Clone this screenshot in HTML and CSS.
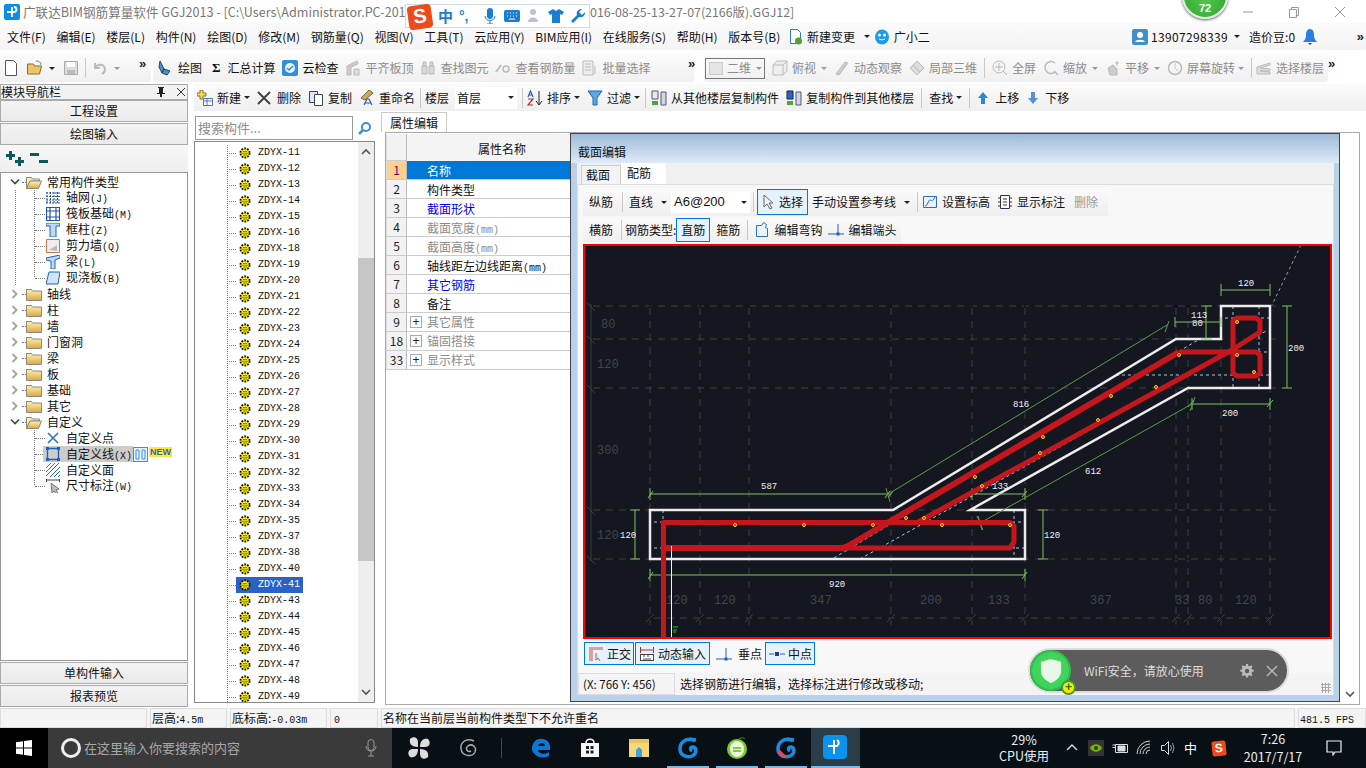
FILE: index.html
```html
<!DOCTYPE html>
<html lang="zh-CN">
<head>
<meta charset="utf-8">
<title>广联达BIM钢筋算量软件 GGJ2013</title>
<link rel="stylesheet" href="styles.css">
</head>
<body>
<svg class="defs" aria-hidden="true">
  <defs>
    <linearGradient id="fold" x1="0" y1="0" x2="0" y2="1"><stop offset="0" stop-color="#fdf2c0"/><stop offset="1" stop-color="#e0a73c"/></linearGradient>
    <symbol id="gear" viewBox="0 0 12 12"><circle cx="6" cy="6" r="4.600" fill="#ffec00" stroke="#111" stroke-width="1.800" stroke-dasharray="1.800 1.100"/><path d="M4.500 4h1v1h-1zM6.500 4h1v1h-1zM3.500 5.800h1v1h-1zM5.500 5.800h1v1h-1zM7.500 5.800h1v1h-1zM4.500 7.500h1v1h-1zM6.500 7.500h1v1h-1z" fill="#111"/></symbol>
    <symbol id="fc" viewBox="0 0 16 14"><path d="M.5 2.500h5l1 1.500h9v9.500H.5z" fill="url(#fold)" stroke="#8a8a7a"/></symbol>
    <symbol id="fo" viewBox="0 0 16 14"><path d="M.5 2.500h5l1 1.500h7v2H4L.5 13.500z" fill="#fbeeb8" stroke="#8a8a7a"/><path d="M4 6h11.500l-3 7.500H.5z" fill="url(#fold)" stroke="#8a8a7a"/></symbol>
    <symbol id="cr" viewBox="0 0 8 10"><path d="M1.500 1l4 4-4 4" fill="none" stroke="#a6a6a6" stroke-width="2"/></symbol>
    <symbol id="cd" viewBox="0 0 10 8"><path d="M1 1.500l4 4 4-4" fill="none" stroke="#444" stroke-width="1.600"/></symbol>
    <path id="gridlines" d="M587 306H1276M587 339H1276M587 388H1276M587 510H1276M587 559H1276M650 302V625M700 302V625M749 302V625M891 302V625M972 302V625M1025 302V625M1176 302V625M1188 302V625M1221 302V625M1270 302V625M648 618H1272"/>
  </defs>
</svg>

<div class="app">
  <header class="title">
    <svg class="logo" viewBox="0 0 16 16"><rect width="16" height="16" rx="2" fill="#0b8fe6"/><path d="M8 3v10M3 8h7a2.500 2.500 0 0 0 0-5" fill="none" stroke="#fff" stroke-width="1.800"/></svg>
    <span class="t1">广联达BIM钢筋算量软件 GGJ2013 - [C:\Users\Administrator.PC-201</span>
    <span class="t2">016-08-25-13-27-07(2166版).GGJ12]</span>
    <div class="winctl">
      <svg viewBox="0 0 12 12"><path d="M1 6h10" stroke="#999"/></svg>
      <svg viewBox="0 0 12 12"><path d="M1.500 3.500h7v8h-7zM3.500 3V1.500h7v8H9" fill="none" stroke="#999"/></svg>
      <svg viewBox="0 0 12 12"><path d="M1 1l10 10M11 1L1 11" stroke="#999"/></svg>
    </div>
  </header>

  <nav class="menu">
    <span class="mi">文件(F)</span><span class="mi">编辑(E)</span><span class="mi">楼层(L)</span><span class="mi">构件(N)</span><span class="mi">绘图(D)</span><span class="mi">修改(M)</span><span class="mi">钢筋量(Q)</span><span class="mi">视图(V)</span><span class="mi">工具(T)</span><span class="mi">云应用(Y)</span><span class="mi">BIM应用(I)</span><span class="mi">在线服务(S)</span><span class="mi">帮助(H)</span><span class="mi">版本号(B)</span>
    <span class="mi ic5"><svg class="i16" viewBox="0 0 16 16"><path d="M2.500.5h7l3 3v11h-10z" fill="#fff" stroke="#2b7cc9"/><circle cx="10.500" cy="12" r="3.500" fill="#53a32a"/></svg>新建变更<i class="car"></i></span>
    <span class="mi ic5 gx"><svg class="i16" viewBox="0 0 16 16"><ellipse cx="8" cy="8" rx="7" ry="7.500" fill="#1d9be8"/><circle cx="5.500" cy="6" r="1.500" fill="#fff"/><circle cx="10.500" cy="6" r="1.500" fill="#fff"/><path d="M5 10q3 2 6 0" stroke="#fff" fill="none"/></svg>广小二</span>
    <span class="grow"></span>
    <div class="userbox">
      <svg class="i16" viewBox="0 0 16 16"><rect width="16" height="16" rx="2" fill="#3d8fce"/><circle cx="8" cy="6" r="3" fill="#fff"/><path d="M3 13c1-3 9-3 10 0z" fill="#fff"/></svg>
      <span class="phone">13907298339</span><i class="car uc"></i><span class="coin">造价豆:0</span>
      <svg class="i16 bell" viewBox="0 0 16 16"><path d="M8 0c3 0 4 3 4 6s1 5 3 7H1c2-2 3-4 3-7s1-6 4-6z" fill="#2a7de1"/><path d="M6 14h4l-2 2z" fill="#124b90"/></svg>
    </div>
    <span class="more">»</span>
  </nav>

  <div class="bar1">
    <div class="group g1">
      <svg class="i16" viewBox="0 0 16 16"><path d="M2.500.5h8l3 3v12h-11z" fill="#fff" stroke="#555"/></svg>
      <span class="ti tight"><svg class="i16" viewBox="0 0 16 16"><path d="M.5 4h6l1 2h7l-2 8H.5z" fill="#f0c56a" stroke="#8a6a2a"/><path d="M9 1c3 0 5 1 5 4" fill="none" stroke="#3a7"/></svg><i class="car"></i></span>
      <svg class="i16" viewBox="0 0 16 16"><path d="M1.500 1.500h13v13h-13z" fill="#ddd" stroke="#aaa"/><rect x="4" y="2" width="8" height="5" fill="#fff"/><rect x="4" y="10" width="8" height="4" fill="#bbb"/></svg>
      <i class="sep sg1"></i>
      <span class="ti tight ug"><svg class="i16" viewBox="0 0 16 16"><path d="M3 3v5h5M3 8c2-4 9-5 10 1 0 2-1 4-3 5" fill="none" stroke="#bbb" stroke-width="2"/></svg><i class="car off"></i></span>
    </div>
    <span class="more m1">»</span>
    <div class="group g2">
      <span class="ti"><svg class="i16" viewBox="0 0 16 16"><path d="M3 1l4 8-2 4-3-6zM7 9l6 2-3 4-5-2z" fill="#4f8fd0" stroke="#245"/></svg>绘图</span>
      <span class="ti sig"><b class="sigma">Σ</b>汇总计算</span>
      <span class="ti"><svg class="i16" viewBox="0 0 16 16"><rect width="16" height="16" rx="2" fill="#2f8fdc"/><circle cx="8" cy="8" r="5" fill="#e9f4fc"/><path d="M5 8l2 2 4-4" fill="none" stroke="#2f8fdc" stroke-width="1.500"/></svg>云检查</span>
      <span class="ti off"><svg class="i16" viewBox="0 0 16 16"><path d="M2 6l10-5 1 3-7 3v8H2z" fill="#ccc" stroke="#bbb"/><path d="M9 9h5v6H9z" fill="#ddd" stroke="#bbb"/></svg>平齐板顶</span>
      <span class="ti off"><svg class="i16" viewBox="0 0 16 16"><path d="M2 6h5v8H2zM9 6h5v8H9zM3 2h3v4H3zM10 2h3v4h-3z" fill="#d8d8d8" stroke="#bbb"/></svg>查找图元</span>
      <span class="ti off"><svg class="i16" viewBox="0 0 16 16"><circle cx="11" cy="9" r="3" fill="none" stroke="#bbb" stroke-width="1.500"/><path d="M1 12l5-7" stroke="#bbb" stroke-width="2"/></svg>查看钢筋量</span>
      <span class="ti off"><svg class="i16" viewBox="0 0 16 16"><path d="M1 1h10v14H1z" fill="#eee" stroke="#bbb"/><path d="M3 4h6M3 7h6M3 10h6M13 6v8" stroke="#bbb"/></svg>批量选择</span>
    </div>
    <span class="more m2">»</span>
    <div class="group g3">
      <span class="combo2d"><i class="sq"></i>二维<i class="car off"></i></span>
      <span class="ti off"><svg class="i16" viewBox="0 0 16 16"><path d="M1 5l4-4h10v10l-4 4H1zM1 5h10v10M11 5l4-4" fill="#eee" stroke="#bbb"/></svg>俯视<i class="car off c9"></i></span>
      <span class="ti off"><svg class="i16" viewBox="0 0 16 16"><path d="M2 14l9-12 3 1-9 12z" fill="#ccc" stroke="#bbb"/></svg>动态观察</span>
      <span class="ti off"><svg class="i16" viewBox="0 0 16 16"><path d="M8 1l7 7-7 7-7-7z" fill="#ddd" stroke="#bbb"/><path d="M4 5l7 7" stroke="#bbb"/></svg>局部三维</span>
      <i class="sep"></i>
      <span class="ti off"><svg class="i16" viewBox="0 0 16 16"><circle cx="7" cy="7" r="6" fill="#f4f4f4" stroke="#bbb"/><path d="M7 3v8M3 7h8M11 11l4 4" stroke="#bbb"/></svg>全屏</span>
      <span class="ti off"><svg class="i16" viewBox="0 0 16 16"><path d="M12 3a6 6 0 1 0 0 9M11 11l4 4" fill="none" stroke="#bbb" stroke-width="1.500"/></svg>缩放<i class="car off c9"></i></span>
      <span class="ti off"><svg class="i16" viewBox="0 0 16 16"><path d="M3 8l5-3 4 4v6H5zM12 1v5M10 3h4" fill="#ccc" stroke="#bbb"/></svg>平移<i class="car off c9"></i></span>
      <span class="ti off"><svg class="i16" viewBox="0 0 16 16"><circle cx="8" cy="8" r="6.500" fill="none" stroke="#bbb" stroke-width="1.500"/><path d="M8 3v5l3 3" stroke="#ccc" fill="none"/></svg>屏幕旋转<i class="car off"></i></span>
      <i class="sep"></i>
      <span class="ti off lastt"><svg class="i16" viewBox="0 0 16 16"><path d="M1 7l13-4v2L4 8l10 1v2H4l10 1v2H1z" fill="#ddd" stroke="#bbb"/></svg>选择楼层</span>
    </div>
    <span class="more m3">»</span>
  </div>

  <div class="work">
    <aside class="nav">
      <div class="navhead"><span>模块导航栏</span><svg class="navi" viewBox="0 0 12 12"><path d="M3 1h6v1H8v5h2v1H7v3H5V8H2V7h2V2H3z" fill="#222"/></svg><svg class="navi" viewBox="0 0 12 12"><path d="M2 2l8 8M10 2l-8 8" stroke="#333"/></svg></div>
      <div class="navbtnrow">工程设置</div>
      <div class="navbtnrow">绘图输入</div>
      <div class="treebar">
        <svg viewBox="0 0 18 15" class="tb-i"><path d="M3 0h3v3h3v3H6v3H3V6H0V3h3zM12 6h3v3h3v3h-3v3h-3v-3H9V9h3z" fill="#0a5a5a"/></svg>
        <svg viewBox="0 0 18 15" class="tb-i"><path d="M0 2h9v3H0zM9 9h9v3H9z" fill="#0a5a5a"/></svg>
      </div>
      <div class="tree">
        <div class="tr"><svg class="chev d"><use href="#cd"/></svg><i class="dots"></i><svg class="fi"><use href="#fo"/></svg><span>常用构件类型</span></div>
        <div class="tc first">
          <div class="tr2"><i class="dots l"></i><svg class="i14" viewBox="0 0 14 14"><path d="M1 1v12M4.500 1v12M8 1v12M11.500 1v12M0 2h14M0 5.500h14M0 9h14M0 12h14" stroke="#2453b0" stroke-dasharray="2 1"/></svg><span>轴网<span class="m">(J)</span></span></div>
          <div class="tr2"><i class="dots l"></i><svg class="i14" viewBox="0 0 14 14"><path d="M.5.500h13v13H.5zM.5 4h13M.5 10h13M4 .500v13M10 .500v13" fill="#fff" stroke="#2453b0" stroke-width="1.200"/></svg><span>筏板基础<span class="m">(M)</span></span></div>
          <div class="tr2"><i class="dots l"></i><svg class="i14" viewBox="0 0 14 14"><path d="M0 0h14v3H10v11H4V3H0z" fill="#bcdaf5" stroke="#1e62b8"/></svg><span>框柱<span class="m">(Z)</span></span></div>
          <div class="tr2"><i class="dots l"></i><svg class="i14" viewBox="0 0 14 14"><path d="M.5.500h13v13H.5z" fill="#eee" stroke="#c9784a"/><path d="M3 11l8-5v6z" fill="#bbb"/></svg><span>剪力墙<span class="m">(Q)</span></span></div>
          <div class="tr2"><i class="dots l"></i><svg class="i14" viewBox="0 0 14 14"><path d="M0 3l14-3v3L9 5v9H5V6L0 5z" fill="#bcdaf5" stroke="#1e62b8"/></svg><span>梁<span class="m">(L)</span></span></div>
          <div class="tr2"><i class="dots l"></i><svg class="i14" viewBox="0 0 14 14"><path d="M3 1h11l-2 12H0z" fill="#cfe4f8" stroke="#1e62b8"/></svg><span>现浇板<span class="m">(B)</span></span></div>
        </div>
        <div class="tr"><svg class="chev"><use href="#cr"/></svg><i class="dots"></i><svg class="fi"><use href="#fc"/></svg><span>轴线</span></div>
        <div class="tr"><svg class="chev"><use href="#cr"/></svg><i class="dots"></i><svg class="fi"><use href="#fc"/></svg><span>柱</span></div>
        <div class="tr"><svg class="chev"><use href="#cr"/></svg><i class="dots"></i><svg class="fi"><use href="#fc"/></svg><span>墙</span></div>
        <div class="tr"><svg class="chev"><use href="#cr"/></svg><i class="dots"></i><svg class="fi"><use href="#fc"/></svg><span>门窗洞</span></div>
        <div class="tr"><svg class="chev"><use href="#cr"/></svg><i class="dots"></i><svg class="fi"><use href="#fc"/></svg><span>梁</span></div>
        <div class="tr"><svg class="chev"><use href="#cr"/></svg><i class="dots"></i><svg class="fi"><use href="#fc"/></svg><span>板</span></div>
        <div class="tr"><svg class="chev"><use href="#cr"/></svg><i class="dots"></i><svg class="fi"><use href="#fc"/></svg><span>基础</span></div>
        <div class="tr"><svg class="chev"><use href="#cr"/></svg><i class="dots"></i><svg class="fi"><use href="#fc"/></svg><span>其它</span></div>
        <div class="tr"><svg class="chev d"><use href="#cd"/></svg><i class="dots"></i><svg class="fi"><use href="#fo"/></svg><span>自定义</span></div>
        <div class="tc">
          <div class="tr2"><i class="dots l"></i><svg class="i14" viewBox="0 0 14 14"><path d="M2 2l10 10M12 2L2 12" stroke="#2a6fc4" stroke-width="1.500"/></svg><span>自定义点</span></div>
          <div class="tr2 sel"><i class="dots l"></i><svg class="i14" viewBox="0 0 14 14"><path d="M1.500 1.500h11v11h-11z" fill="none" stroke="#1e62b8" stroke-width="1.300"/><path d="M0 0h3v3H0zM11 0h3v3h-3zM0 11h3v3H0zM11 11h3v3h-3z" fill="#1e62b8"/></svg><span class="seltext">自定义线<span class="m">(X)</span></span><svg class="i15" viewBox="0 0 15 15"><rect x=".5" y=".500" width="14" height="14" fill="#e6f2fd" stroke="#3a8fe0"/><path d="M3 3h3v9H3zM9 3h3v9H9z" fill="none" stroke="#3a8fe0"/></svg><span class="new">NEW</span></div>
          <div class="tr2"><i class="dots l"></i><svg class="i14" viewBox="0 0 14 14"><path d="M0 5l5-5M0 9l9-9M0 13l13-13M4 14l10-10M8 14l6-6M12 14l2-2" stroke="#2a6fc4"/></svg><span>自定义面</span></div>
          <div class="tr2"><i class="dots l"></i><svg class="i14" viewBox="0 0 14 14"><path d="M0 1h14M.5 0v3M13.500 0v3" stroke="#444"/><path d="M5 4l8 6-3 1 2 3-2 1-2-3-2 2z" fill="#bbb" stroke="#777"/></svg><span>尺寸标注<span class="m">(W)</span></span></div>
        </div>
      </div>
      <div class="navbtnrow">单构件输入</div>
      <div class="navbtnrow">报表预览</div>
    </aside>

    <div class="rightcol">
      <div class="bar2">
        <span class="ti"><svg class="i16" viewBox="0 0 16 16"><path d="M3 0h3v3h3v3H6v3H3V6H0V3h3z" fill="#f2dc5a" stroke="#8a7a20"/><path d="M6.500 8.500h9v7h-9zM6.500 11h9M10 8.500v7" fill="#fff" stroke="#5577aa"/></svg>新建<i class="car"></i></span>
        <span class="ti delx"><svg class="i14" viewBox="0 0 14 14"><path d="M1 1l12 12M13 1L1 13" stroke="#444" stroke-width="2"/></svg>删除</span>
        <span class="ti"><svg class="i16" viewBox="0 0 16 16"><path d="M1.500 1.500h8v11h-8z" fill="#dde8f6" stroke="#345"/><path d="M6.500 4.500h8v11h-8z" fill="#fff" stroke="#345"/></svg>复制</span>
        <span class="ti"><svg class="i16" viewBox="0 0 16 16"><path d="M2 8l8-8 4 3-8 7z" fill="#cfaa45" stroke="#765"/><path d="M5 15l3-6h2l3 6M6.500 13h5" fill="none" stroke="#2a5bb0" stroke-width="1.200"/></svg>重命名</span>
        <i class="sep back2"></i>
        <span class="lbl">楼层</span>
        <span class="floor"><span>首层</span><i class="car"></i></span>
        <i class="sep back2"></i>
        <span class="ti back3"><svg class="i16" viewBox="0 0 16 16"><path d="M1 7l2.500-6L6 7M2 5h3" fill="none" stroke="#2a5bb0" stroke-width="1.200"/><path d="M1 9h5L1 15h5" fill="none" stroke="#a33" stroke-width="1.200"/><path d="M12 1v13M9 11l3 4 3-4" fill="none" stroke="#222"/></svg>排序<i class="car"></i></span>
        <span class="ti"><svg class="i16" viewBox="0 0 16 16"><path d="M1 1h14L10 8v7H6V8z" fill="#5aa5e8" stroke="#2068b0"/></svg>过滤<i class="car"></i></span>
        <i class="sep back2"></i>
        <span class="ti back2"><svg class="i16" viewBox="0 0 16 16"><path d="M1 1h6v8H1z" fill="#e8e8ee" stroke="#557"/><path d="M10 2h5v13h-5z" fill="#cdd9e8" stroke="#557"/><path d="M1 11h6v4H1z" fill="#4aa83a"/></svg>从其他楼层复制构件</span>
        <span class="ti"><svg class="i16" viewBox="0 0 16 16"><path d="M1 1h6v8H1z" fill="#2c66c4" stroke="#124"/><path d="M10 2h5v13h-5z" fill="#cdd9e8" stroke="#557"/><path d="M1 11h6v4H1z" fill="#4aa83a"/></svg>复制构件到其他楼层</span>
        <i class="sep"></i>
        <span class="ti"><span>查找</span><i class="car"></i></span>
        <i class="sep"></i>
        <span class="ti updn"><svg class="i12" viewBox="0 0 12 12"><path d="M6 0l5 6H8v6H4V6H1z" fill="#2a86d8"/></svg>上移</span>
        <span class="ti updn"><svg class="i12" viewBox="0 0 12 12"><path d="M6 12l5-6H8V0H4v6H1z" fill="#5a8fd8"/></svg>下移</span>
      </div>

      <div class="content">
        <div class="listcol">
          <div class="searchrow">
            <div class="search">搜索构件...</div>
            <svg class="srch" viewBox="0 0 14 14"><circle cx="8" cy="6" r="4" fill="none" stroke="#3a8fd8" stroke-width="2"/><path d="M5 9l-4 4" stroke="#3a8fd8" stroke-width="2.500"/></svg>
          </div>
          <div class="list">
            <div class="rows">
              <div class="zr"><i class="dots z"></i><svg class="g"><use href="#gear"/></svg>ZDYX-11</div>
              <div class="zr"><i class="dots z"></i><svg class="g"><use href="#gear"/></svg>ZDYX-12</div>
              <div class="zr"><i class="dots z"></i><svg class="g"><use href="#gear"/></svg>ZDYX-13</div>
              <div class="zr"><i class="dots z"></i><svg class="g"><use href="#gear"/></svg>ZDYX-14</div>
              <div class="zr"><i class="dots z"></i><svg class="g"><use href="#gear"/></svg>ZDYX-15</div>
              <div class="zr"><i class="dots z"></i><svg class="g"><use href="#gear"/></svg>ZDYX-16</div>
              <div class="zr"><i class="dots z"></i><svg class="g"><use href="#gear"/></svg>ZDYX-18</div>
              <div class="zr"><i class="dots z"></i><svg class="g"><use href="#gear"/></svg>ZDYX-19</div>
              <div class="zr"><i class="dots z"></i><svg class="g"><use href="#gear"/></svg>ZDYX-20</div>
              <div class="zr"><i class="dots z"></i><svg class="g"><use href="#gear"/></svg>ZDYX-21</div>
              <div class="zr"><i class="dots z"></i><svg class="g"><use href="#gear"/></svg>ZDYX-22</div>
              <div class="zr"><i class="dots z"></i><svg class="g"><use href="#gear"/></svg>ZDYX-23</div>
              <div class="zr"><i class="dots z"></i><svg class="g"><use href="#gear"/></svg>ZDYX-24</div>
              <div class="zr"><i class="dots z"></i><svg class="g"><use href="#gear"/></svg>ZDYX-25</div>
              <div class="zr"><i class="dots z"></i><svg class="g"><use href="#gear"/></svg>ZDYX-26</div>
              <div class="zr"><i class="dots z"></i><svg class="g"><use href="#gear"/></svg>ZDYX-27</div>
              <div class="zr"><i class="dots z"></i><svg class="g"><use href="#gear"/></svg>ZDYX-28</div>
              <div class="zr"><i class="dots z"></i><svg class="g"><use href="#gear"/></svg>ZDYX-29</div>
              <div class="zr"><i class="dots z"></i><svg class="g"><use href="#gear"/></svg>ZDYX-30</div>
              <div class="zr"><i class="dots z"></i><svg class="g"><use href="#gear"/></svg>ZDYX-31</div>
              <div class="zr"><i class="dots z"></i><svg class="g"><use href="#gear"/></svg>ZDYX-32</div>
              <div class="zr"><i class="dots z"></i><svg class="g"><use href="#gear"/></svg>ZDYX-33</div>
              <div class="zr"><i class="dots z"></i><svg class="g"><use href="#gear"/></svg>ZDYX-34</div>
              <div class="zr"><i class="dots z"></i><svg class="g"><use href="#gear"/></svg>ZDYX-35</div>
              <div class="zr"><i class="dots z"></i><svg class="g"><use href="#gear"/></svg>ZDYX-37</div>
              <div class="zr"><i class="dots z"></i><svg class="g"><use href="#gear"/></svg>ZDYX-38</div>
              <div class="zr"><i class="dots z"></i><svg class="g"><use href="#gear"/></svg>ZDYX-40</div>
              <div class="zr on"><i class="dots z"></i><svg class="g"><use href="#gear"/></svg><span class="zt">ZDYX-41</span></div>
              <div class="zr"><i class="dots z"></i><svg class="g"><use href="#gear"/></svg>ZDYX-43</div>
              <div class="zr"><i class="dots z"></i><svg class="g"><use href="#gear"/></svg>ZDYX-44</div>
              <div class="zr"><i class="dots z"></i><svg class="g"><use href="#gear"/></svg>ZDYX-45</div>
              <div class="zr"><i class="dots z"></i><svg class="g"><use href="#gear"/></svg>ZDYX-46</div>
              <div class="zr"><i class="dots z"></i><svg class="g"><use href="#gear"/></svg>ZDYX-47</div>
              <div class="zr"><i class="dots z"></i><svg class="g"><use href="#gear"/></svg>ZDYX-48</div>
              <div class="zr"><i class="dots z"></i><svg class="g"><use href="#gear"/></svg>ZDYX-49</div>
            </div>
            <div class="vsb">
              <svg class="arw" viewBox="0 0 10 8"><path d="M1 6l4-4 4 4" fill="none" stroke="#555" stroke-width="1.600"/></svg>
              <div class="trk"><div class="thumb"></div></div>
              <svg class="arw" viewBox="0 0 10 8"><path d="M1 2l4 4 4-4" fill="none" stroke="#555" stroke-width="1.600"/></svg>
            </div>
          </div>
        </div>

        <div class="propcol">
          <div class="ptabs"><span class="ptab">属性编辑</span></div>
          <div class="ppanel">
            <div class="pgrid">
              <div class="ph"><span class="pn"></span><span class="pname hd">属性名称</span></div>
              <div class="pr act"><span class="pn">1</span><span class="pname">名称</span></div>
              <div class="pr"><span class="pn">2</span><span class="pname">构件类型</span></div>
              <div class="pr blue"><span class="pn">3</span><span class="pname">截面形状</span></div>
              <div class="pr gray"><span class="pn">4</span><span class="pname">截面宽度<span class="m">(mm)</span></span></div>
              <div class="pr gray"><span class="pn">5</span><span class="pname">截面高度<span class="m">(mm)</span></span></div>
              <div class="pr"><span class="pn">6</span><span class="pname">轴线距左边线距离<span class="m">(mm)</span></span></div>
              <div class="pr blue"><span class="pn">7</span><span class="pname">其它钢筋</span></div>
              <div class="pr"><span class="pn">8</span><span class="pname">备注</span></div>
              <div class="pr gray"><span class="pn">9</span><span class="pname pl"><i class="plus">+</i>其它属性</span></div>
              <div class="pr gray"><span class="pn">18</span><span class="pname pl"><i class="plus">+</i>锚固搭接</span></div>
              <div class="pr gray"><span class="pn">33</span><span class="pname pl"><i class="plus">+</i>显示样式</span></div>
            </div>
            <div class="psb"><svg class="arw" viewBox="0 0 10 8"><path d="M1 2l4 4 4-4" fill="none" stroke="#555" stroke-width="1.600"/></svg></div>
          </div>
        </div>
      </div>
    </div>
  </div>

  <footer class="status">
    <span class="st s0"></span><span class="st s1">层高:<span class="m">4.5m</span></span><span class="st s2">底标高:<span class="m">-0.03m</span></span><span class="st s3"><span class="m">0</span></span><span class="st s4">名称在当前层当前构件类型下不允许重名</span><span class="st s5"><span class="m">481.5 FPS</span></span>
  </footer>

  <div class="taskbar">
    <div class="start"><svg viewBox="0 0 16 16" class="winlogo"><path d="M0 2.200l7-1v6.300H0zM8 1l8-1v7.500H8zM0 8.500h7v6.300l-7-1zM8 8.500h8V16l-8-1z" fill="#fff"/></svg></div>
    <div class="searchbox">
      <i class="ring"></i><span class="sbtxt">在这里输入你要搜索的内容</span>
      <svg class="mic" viewBox="0 0 12 18"><rect x="3" y=".500" width="6" height="11" rx="3" fill="none" stroke="#999"/><path d="M1 7c0 7 10 7 10 0M6 13v4M3 17h6" fill="none" stroke="#999"/></svg>
    </div>
    <div class="apps">
      <span class="app-i"><svg class="i24" viewBox="0 0 24 24"><path d="M11 11C4 11 2 7 3 3c3-3 8-2 8 3zM13 11c0-7 4-9 8-8 3 3 2 8-3 8zM13 13c7 0 9 4 8 8-3 3-8 2-8-3zM11 13c0 7-4 9-8 8-3-3-2-8 3-8z" fill="#ddd"/></svg></span>
      <span class="app-i"><svg class="i24" viewBox="0 0 24 24"><path d="M18 5C10 1 4 7 5 13c1 7 11 9 14 3 2-5-3-9-7-6-3 2-1 7 3 5" fill="none" stroke="#aaa" stroke-width="1.500"/></svg></span>
      <i class="tsep"></i>
      <span class="app-i"><svg class="i24" viewBox="0 0 24 24"><path d="M3 13C3 5 9 2 14 3c5 1 8 5 7 11H9c0 4 7 5 11 2v4c-6 3-13 1-15-3-1 0-2-2-2-4zM9 10h7c0-4-6-4-7 0z" fill="#0a78d7"/></svg></span>
      <span class="app-i"><svg class="i24" viewBox="0 0 24 24"><path d="M3 7h18v14H3z" fill="#f6f6f6"/><path d="M8 7c0-5 8-5 8 0" fill="none" stroke="#f6f6f6" stroke-width="1.500"/><path d="M8 10h3v3H8zM12.500 10h3v3h-3zM8 14.500h3v3H8zM12.500 14.500h3v3h-3z" fill="#222"/></svg></span>
      <span class="app-i"><svg class="i24" viewBox="0 0 24 24"><path d="M2 3h20v18H2z" fill="#f6d878"/><path d="M2 3h20v4H2z" fill="#e9c35f"/><path d="M9 21v-7l3-3 3 3v7z" fill="#37a3e0"/></svg></span>
      <span class="app-i run"><svg class="i24" viewBox="0 0 24 24"><path d="M19 5C12 1 4 5 4 13c0 7 8 9 12 7 5-2 5-8 1-9-3 0-3 3-1 4M13 3l7 1" fill="none" stroke="#1b8be0" stroke-width="3.500"/></svg></span>
      <span class="app-i run"><svg class="i24" viewBox="0 0 24 24"><circle cx="12" cy="13" r="10" fill="#7ccb2e"/><ellipse cx="12" cy="13" rx="7" ry="8" fill="#eaf7d8"/><path d="M8 12h8M8 15h8" stroke="#6cb522" stroke-width="1.500"/><path d="M14 3c3-2 5-1 6 0" stroke="#4a9c1c" fill="none"/></svg></span>
      <span class="app-i run"><svg class="i24" viewBox="0 0 24 24"><path d="M19 5C12 1 4 5 4 13c0 7 8 9 12 7 5-2 5-8 1-9-3 0-3 3-1 4M13 3l7 1" fill="none" stroke="#1b8be0" stroke-width="3.500"/><path d="M5 13l8 8-5 1-4-5z" fill="#e24a5a"/></svg></span>
      <span class="app-i active"><svg class="i24" viewBox="0 0 24 24"><rect width="24" height="24" rx="4" fill="#0a92ec"/><path d="M11 5v14M5 11h9a3.500 3.500 0 0 0 0-6" fill="none" stroke="#fff" stroke-width="2"/></svg></span>
    </div>
    <span class="grow"></span>
    <div class="cpu"><span>29%</span><span>CPU使用</span></div>
    <div class="tray">
      <svg class="i12 chv" viewBox="0 0 12 12"><path d="M1 8l5-5 5 5" fill="none" stroke="#ddd" stroke-width="1.300"/></svg>
      <svg class="i16" viewBox="0 0 16 16"><rect width="16" height="16" fill="#333"/><path d="M2 8c3-5 9-5 12 0-3 5-9 5-12 0z" fill="#76b900"/><circle cx="8" cy="8" r="2" fill="#333"/></svg>
      <svg class="i16" viewBox="0 0 16 16"><path d="M3.500 4.500h12v8h-12z" fill="none" stroke="#ddd"/><path d="M6 6h7v5H6zM.5 5h3M.5 7.500h3" fill="#ddd" stroke="#ddd"/></svg>
      <svg class="i16" viewBox="0 0 16 16"><path d="M1 14a13 13 0 0 1 13-13M4 14a10 10 0 0 1 10-10M7 14a7 7 0 0 1 7-7M10 14a4 4 0 0 1 4-4" fill="none" stroke="#ccc"/></svg>
      <svg class="i16" viewBox="0 0 16 16"><path d="M1.500 5.500h3l4-4v13l-4-4h-3z" fill="none" stroke="#ddd"/><path d="M10.500 5q2 3 0 6M12.500 3q3 5 0 10" fill="none" stroke="#999"/></svg>
      <span class="zh">中</span>
      <span class="sgsm">S</span>
    </div>
    <div class="clock"><span>7:26</span><span>2017/7/17</span></div>
    <svg class="notif" viewBox="0 0 16 16"><path d="M1 1h14v11H9l-2 3v-3H1z" fill="none" stroke="#eee" stroke-width="1.200"/></svg>
  </div>
</div>

<!-- floating window -->
<section class="dlg">
  <div class="dlgtitle">截面编辑</div>
  <div class="dlgbody">
    <div class="dtabs"><span class="dtab">截面</span><span class="dtab cur">配筋</span></div>
    <div class="dpanel">
      <div class="drow r1">
        <span class="lb">纵筋</span><i class="sep a"></i>
        <span class="ti tiny a1">直线<i class="car"></i></span>
        <span class="spec"><span>A6@200</span><i class="car"></i></span>
        <i class="sep b"></i>
        <span class="tg sel1"><svg class="i16" viewBox="0 0 16 16"><path d="M3 1v12l3-3 3 5 2-1-3-5h4z" fill="#f2f2f2" stroke="#666"/></svg>选择</span>
        <span class="ti tiny c">手动设置参考线<i class="car"></i></span>
        <i class="sep"></i>
        <span class="ti c"><svg class="i16" viewBox="0 0 16 16"><path d="M1.500 2.500h13v11h-13z" fill="#eaf3fc" stroke="#2a6fc4"/><path d="M3 12c3 0 3-6 5-6s2 3 5-3" fill="none" stroke="#2a6fc4"/></svg>设置标高</span>
        <span class="ti"><svg class="i16" viewBox="0 0 16 16"><path d="M3.500 1.500h9v13h-9z" fill="#fff" stroke="#334"/><path d="M1 4h3M1 8h3M1 12h3M12 4h3M12 8h3M12 12h3M6 5h4M6 8h4M6 11h4" stroke="#334"/></svg>显示标注</span>
        <span class="dis">删除</span>
      </div>
      <div class="drow r2">
        <span class="lb">横筋</span><i class="sep a"></i>
        <span class="lb ty">钢筋类型:</span>
        <span class="tg sel2">直筋</span>
        <span class="lb">箍筋</span><i class="sep e"></i>
        <span class="ti"><svg class="i16" viewBox="0 0 16 16"><path d="M2.500 3.500h5l2-3 3 2-1 3 2 1v8h-11z" fill="#eaf3fc" stroke="#2a6fc4"/></svg>编辑弯钩</span>
        <span class="ti"><svg class="i16" viewBox="0 0 16 16"><path d="M0 12h16M10 2v11" stroke="#1e62b8"/><rect x="8.500" y="10.500" width="3" height="3" fill="#1e62b8"/></svg>编辑端头</span>
      </div>
      <div class="canvas">
        <svg class="draw" viewBox="583 244 749 395">
          <use href="#gridlines" class="gline"/>
          <use href="#gridlines" class="gdash"/>
          <path class="gridsolid" d="M591 304V561M587 303l8 8M587 336l8 8M587 385l8 8M587 507l8 8M587 556l8 8M646 622l8-8M696 622l8-8M745 622l8-8M887 622l8-8M968 622l8-8M1021 622l8-8M1172 622l8-8M1184 622l8-8M1217 622l8-8M1266 622l8-8"/>
          <g class="glabel">
            <text x="601" y="328">80</text><text x="597" y="368">120</text><text x="597" y="454">300</text><text x="597" y="539">120</text>
            <text x="666" y="604">120</text><text x="714" y="604">120</text><text x="810" y="604">347</text><text x="920" y="604">200</text><text x="988" y="604">133</text><text x="1090" y="604">367</text><text x="1175" y="604">33</text><text x="1198" y="604">80</text><text x="1235" y="604">120</text>
          </g>
          <path class="cyan" d="M663 510V522M1014 510V559M654 522H661M1006 522H1024M654 548H661M1016 548H1024M834 558L1198 340M860 559L1268 330M1116 375H1270M1198 352H1270M1225 318H1270M1233 306V388M1259 306V388"/>
          <path class="ray" d="M1301 245L1272 305"/>
          <path class="outline" d="M650 510H893L1176 339H1221V306H1270V388H1188L970 510H1025V559H650Z"/>
          <path class="dim" d="M650 494H890M650 488V500M648 498l5-7M885 498l5-7M888 498l5-7M972 494H1025M972 488V500M1025 488V500M970 497l5-6M1022 497l5-6M1192 404H1270M1188 407l6-7M1192 398V410M1270 398V410M1267 407l6-7M650 575H1025M650 569V581M1025 569V581M648 579l5-7M1022 579l5-7M635 510V559M630 510H640M630 559H640M1043 510V559M1038 510H1048M1038 559H1048M1287 306V388M1282 306H1292M1282 388H1292M1221 290H1270M1221 284V296M1270 284V296M1206 306V339M1201 306H1212M1201 339H1212M1175 322H1221M1175 317V327M1221 317V327"/>
          <path class="dim2" d="M890 493L1167 325M1165 332l4-11M890 502L886 488M980 523L1192 404M983 530l-6-14M978 516l4 14M1190 411l5-14"/>
          <g class="dlabel">
            <text x="761" y="489">587</text><text x="829" y="587">920</text><text x="620" y="538">120</text><text x="1044" y="538">120</text><text x="992" y="489">133</text><text x="1013" y="407">816</text><text x="1085" y="474">612</text><text x="1222" y="416">200</text><text x="1288" y="351">200</text><text x="1238" y="286">120</text><text x="1191" y="318">113</text><text x="1192" y="326">80</text>
          </g>
          <path class="rebar" d="M663.500 639V522.500H1010L1014 526V542L1010 548H840"/>
          <path class="rebar thick" d="M664 548H842L848 546L1179 352"/>
          <path class="rebar" d="M1179 352H1256L1260 355V373L1256 376H1237L1233 373V321L1237 318H1256L1260 321V332L1232 350L918 522"/>
          <path class="thin" d="M671.500 546V639"/>
          <path class="tick" d="M673 627h5M673 630h4M673 632h3"/>
          <g class="dotsy">
            <circle cx="735" cy="525" r="1.500"/><circle cx="804" cy="525" r="1.500"/><circle cx="873" cy="525" r="1.500"/><circle cx="906" cy="518" r="1.500"/><circle cx="924" cy="518" r="1.500"/><circle cx="942" cy="525" r="1.500"/><circle cx="1010" cy="525" r="1.500"/><circle cx="975" cy="477" r="1.500"/><circle cx="982" cy="486" r="1.500"/><circle cx="1043" cy="437" r="1.500"/><circle cx="1040" cy="453" r="1.500"/><circle cx="1111" cy="396" r="1.500"/><circle cx="1098" cy="420" r="1.500"/><circle cx="1156" cy="387" r="1.500"/><circle cx="1179" cy="355" r="1.500"/><circle cx="1237" cy="322" r="1.500"/><circle cx="1237" cy="355" r="1.500"/><circle cx="1254" cy="372" r="1.500"/>
          </g>
        </svg>
      </div>
      <div class="drow r3">
        <span class="tg on1 w50"><svg class="i16" viewBox="0 0 16 16"><path d="M1 1h14v3H5v11H1z" fill="#d9a0a0"/><path d="M8 7v7l2-2 2 3" fill="#ddd" stroke="#777"/></svg>正交</span><span class="tg on1 w75"><svg class="i16" viewBox="0 0 16 16"><path d="M1.500 4h13M1.500 1v6M14.500 1v6" stroke="#a33" fill="none"/><rect x="1.500" y="8.500" width="13" height="6" fill="#fff" stroke="#444"/><path d="M4 10h2M8 10h2M4 13h8" stroke="#444"/></svg>动态输入</span>
        <span class="ti vd"><svg class="i16" viewBox="0 0 16 16"><path d="M0 13h16M10 2v11" stroke="#1e62b8"/><rect x="8.500" y="11.500" width="3" height="3" fill="#1e62b8"/></svg>垂点</span>
        <span class="tg on1 w50"><svg class="i16" viewBox="0 0 16 16"><path d="M0 8h5M11 8h5" stroke="#1e62b8"/><rect x="6" y="6" width="4" height="4" fill="#1e3a8a"/></svg>中点</span>
      </div>
      <div class="dstatus"><span class="xy">(X: 766 Y: 456)</span><span class="dmsg">选择钢筋进行编辑，选择标注进行修改或移动;</span><span class="grip"></span></div>
    </div>
  </div>
</section>

<!-- floating IME bar -->
<div class="ime">
  <span class="imes">S</span>
  <span class="imez">中</span>
  <span class="imep">°,</span>
  <svg class="i16 imem" viewBox="0 0 16 16"><rect x="5" y="0" width="6" height="11" rx="3" fill="#1a7dd0"/><path d="M3 8c0 6 10 6 10 0M8 13v3M5 16h6" fill="none" stroke="#1a7dd0"/></svg>
  <svg class="i16" viewBox="0 0 16 16"><rect x="0" y="2" width="16" height="12" rx="2" fill="#1a7dd0"/><path d="M3 5h1M6 5h1M9 5h1M12 5h1M3 8h1M6 8h1M9 8h1M12 8h1M5 11h6" stroke="#fff"/></svg>
  <svg class="i16" viewBox="0 0 16 16"><circle cx="7" cy="4" r="3" fill="#b8c4d0"/><path d="M2 14c0-6 10-6 10 0z" fill="#b8c4d0"/></svg>
  <svg class="i16" viewBox="0 0 16 16"><path d="M5 1L0 4l2 3 2-1v9h8V6l2 1 2-3-5-3-3 2z" fill="#1a7dd0"/></svg>
  <svg class="i16" viewBox="0 0 16 16"><path d="M15 4l-3 3-3-3 3-3a4.500 4.500 0 0 0-5 6L1 13l2 2 6-6a4.500 4.500 0 0 0 6-5z" fill="#1a7dd0"/></svg>
</div>

<!-- floating badge, clipped by the top of the screen -->
<div class="ball">72</div>

<!-- floating wifi notification -->
<div class="wifi">
  <span class="wcircle"><svg class="wsh" viewBox="0 0 24 28"><path d="M12 1l11 3v10c0 7-6 11-11 13C7 25 1 21 1 14V4z" fill="#e8f7ea"/></svg><span class="wplus">+</span></span>
  <span class="wtxt">WiFi安全，请放心使用</span>
  <svg class="wgear" viewBox="0 0 16 16"><path d="M7 0h2l.5 2 1.500.6L12.800 1.500l1.400 1.400L13.100 4.700l.6 1.500 2 .5v2l-2 .5-.6 1.500 1.100 1.800-1.400 1.400-1.800-1.100-1.500.6-.5 2H7l-.5-2-1.500-.6-1.800 1.100-1.400-1.400 1.100-1.800-.6-1.500-2-.5v-2l2-.5.6-1.500L1.800 2.900l1.400-1.400L5 2.600 6.500 2z" fill="#bbb"/><circle cx="8" cy="8" r="2.500" fill="#5c5c5c"/></svg>
  <svg class="wx" viewBox="0 0 12 12"><path d="M1 1l10 10M11 1L1 11" stroke="#bbb" stroke-width="1.300"/></svg>
</div>
</body>
</html>
```
FILE: styles.css
```css
* { box-sizing: border-box; }
html, body { margin: 0; padding: 0; width: 1366px; height: 768px; overflow: hidden; background: #fff; }
body { position: relative; font: 12px/16px "Noto Sans CJK SC", "Liberation Sans", sans-serif; color: #111; }
i { font-style: normal; display: block; flex: none; }
svg { display: block; flex: none; }
.defs { width: 0; height: 0; position: absolute; }
.i12 { width: 12px; height: 12px; } .i14 { width: 14px; height: 14px; } .i15 { width: 15px; height: 15px; } .i16 { width: 16px; height: 16px; } .i24 { width: 24px; height: 24px; }
.grow { flex: 1; }
.m { font-family: "Liberation Mono", "DejaVu Sans Mono", monospace; font-size: 10px; }
.car { width: 0; height: 0; border: 3px solid transparent; border-top: 3px solid #222; border-bottom: 0; margin-left: 6px; }
.car.off { border-top-color: #999; }
.more { font: 700 13px/14px "Liberation Sans", sans-serif; color: #222; }
.sep { width: 1px; height: 20px; background: #c8c8c8; }

.app { display: flex; flex-direction: column; width: 1366px; height: 768px; }

/* title */
.title { height: 23px; display: flex; align-items: center; padding-left: 4px; color: #777; font-size: 12.400px; flex: none; }
.logo { width: 16px; height: 16px; margin-right: 3px; }
.t1 { width: 567px; flex: none; white-space: nowrap; font-size: 12.600px; }
.t2 { white-space: nowrap; }
.winctl { margin-left: auto; display: flex; gap: 34px; padding-right: 20px; }
.winctl svg { width: 12px; height: 12px; }

/* menu */
.menu { height: 27px; flex: none; display: flex; align-items: center; padding-left: 7px; gap: 10.700px; background: linear-gradient(#fafafa, #f4f4f4); white-space: nowrap; }
.mi { flex: none; }
.ic5 { display: flex; align-items: center; gap: 3px; margin-left: -3px; }
.ic5.gx { gap: 4px; margin-left: -7px; }
.userbox { display: flex; align-items: center; height: 27px; gap: 4px; }
.phone { margin-left: -1px; letter-spacing: .35px; }
.uc { margin-left: 2px; margin-right: 5px; }
.coin { margin-right: 3px; }
.menu .more { margin-left: 28px; margin-right: 2px; }

/* toolbar 1 */
.bar1 { height: 28px; margin-top: 4px; flex: none; display: flex; align-items: center; white-space: nowrap; }
.group { display: flex; align-items: center; height: 28px; background: linear-gradient(#fbfbfb, #f0f0f0); border-radius: 3px; }
.g1 { padding-left: 3px; gap: 8px; width: 151px; }
.sg1 { margin-left: -2px; }
.ug { margin-left: -2px; }
.m1 { margin: 0 0 8px -12px; width: 14px; }
.g2 { padding-left: 4px; gap: 6px; width: 541px; }
.m2 { margin: 0 0 8px -6px; width: 16px; }
.g3 { gap: 7px; width: 624px; }
.m3 { margin: 0 0 8px 0; }
.ti { display: inline-flex; align-items: center; gap: 5px; flex: none; }
.ti .car { margin-left: -1px; }
.ti .car.c9 { margin-left: 1px; }
.ti.tight { gap: 0; }
.ti.tight .car { margin-left: 6px; }
.ti.off { color: #8c8c8c; }
.sig { gap: 7px; margin-left: 4px; }
.sigma { font: 700 13px "Liberation Serif", serif; }
.g3 .ti { gap: 4px; }
.lastt { margin-left: -3px; }
.combo2d { display: flex; align-items: center; width: 60px; height: 21px; margin-left: 1px; border: 1px solid #777; color: #8c8c8c; padding-left: 3px; }
.sq { width: 14px; height: 13px; background: #e4e4e4; border: 1px solid #ccc; margin-right: 4px; }
.combo2d .car { margin-left: 5px; }

/* work */
.work { height: 624px; margin-top: 2px; flex: none; display: flex; }
.nav { width: 188px; flex: none; display: flex; flex-direction: column; }
.navhead { height: 16px; display: flex; align-items: center; background: #f2f2f2; border: 1px solid #aaa; gap: 8px; }
.navhead span:first-child { flex: 1; }
.navi { width: 12px; height: 12px; }
.navbtnrow { height: 22px; background: linear-gradient(#f3f3f3, #ebebeb); border: 1px solid #aaa; text-align: center; line-height: 20px; }
.navbtnrow + .navbtnrow { margin-top: 1px; }
.treebar { height: 27px; flex: none; padding: 6px 0 0 6px; display: flex; gap: 6px; background: linear-gradient(#f8f8f8, #eee); }
.tb-i { width: 18px; height: 15px; }
.tree { height: 489px; flex: none; border: 1px solid #999; padding-top: 1px; margin-bottom: 1px; background: #fff; white-space: nowrap; }
.tr { height: 16px; display: flex; align-items: center; padding-left: 10px; }
.chev { width: 8px; height: 10px; }
.chev.d { width: 10px; height: 8px; margin-left: -1px; margin-right: -1px; }
.dots { height: 0; border-top: 1px dotted #777; }
.tr .dots { width: 4px; margin-left: 3px; }
.fi { width: 16px; height: 14px; margin-right: 5px; }
.tc { background: repeating-linear-gradient(#777 0 1px, transparent 1px 2px) 33px 0 / 1px calc(100% - 8px) no-repeat; }
.tc.first { background:
  repeating-linear-gradient(#777 0 1px, transparent 1px 2px) 33px 0 / 1px calc(100% - 8px) no-repeat,
  repeating-linear-gradient(#777 0 1px, transparent 1px 2px) 14px 0 / 1px 100% no-repeat; }
.tr2 { height: 16px; display: flex; align-items: center; padding-left: 34px; }
.tr2 .l { width: 10px; margin-right: 1px; }
.tr2 .i14 { margin-right: 6px; }
.sel .i14 { background: #ccc; box-shadow: 0 0 0 1px #ccc, -2px 0 0 1px #ccc, 6px 0 0 1px #ccc; }
.seltext { background: #ccc; height: 16px; width: 67px; }
.new { font: 700 9px/10px "Liberation Sans", sans-serif; background: #ffe44a; color: #2b6ab0; margin: -4px 0 0 1px; padding: 0 1px; }

/* right */
.rightcol { flex: 1; display: flex; flex-direction: column; padding-left: 6px; min-width: 0; }
.bar2 { height: 27px; flex: none; display: flex; align-items: center; gap: 7px; padding-left: 3px; background: linear-gradient(#fbfbfb, #efefef); white-space: nowrap; }
.bar2 .ti { gap: 4px; }
.bar2 .delx { gap: 6px; }
.bar2 .back3 { margin-left: -3px; }
.back2 { margin-left: -2px; }
.lbl { margin-left: -3px; }
.floor { width: 62px; height: 22px; margin-left: -1px; background: #fff; display: flex; align-items: center; padding-left: 2px; justify-content: space-between; padding-right: 3px; }
.bar2 .updn { gap: 6px; }
.bar2 .updn + .updn { margin-left: 1px; }
.content { flex: 1; display: flex; min-height: 0; }
.listcol { width: 181px; flex: none; display: flex; flex-direction: column; padding-top: 5px; }
.searchrow { height: 24px; display: flex; align-items: center; flex: none; }
.search { width: 158px; height: 24px; margin-left: 1px; border: 1px solid #999; color: #8c8c8c; line-height: 22px; padding-left: 2px; background: #fff; font-size: 13px; }
.srch { width: 14px; height: 14px; margin-left: 5px; }
.list { margin-top: 1px; height: 562px; border: 1px solid #888; display: flex; background: #fff; overflow: hidden; }
.rows { flex: 1; padding-top: 3px; }
.zr { height: 16px; display: flex; align-items: center; padding-left: 32px; font: 10px/16px "Liberation Mono", "DejaVu Sans Mono", monospace; color: #111;
  background: repeating-linear-gradient(#777 0 1px, transparent 1px 2px) 32px 0 / 1px 100% no-repeat; }
.z { width: 9px; margin-right: 3px; }
.g { width: 12px; height: 12px; margin-right: 7px; }
.on .g { background: #2a62c8; box-shadow: 0 0 0 2px #2a62c8, -1px 0 0 2px #2a62c8; }
.on .zt { background: #2a62c8; color: #fff; height: 16px; width: 52px; margin-left: -7px; padding-left: 7px; }
.vsb { width: 16px; flex: none; display: flex; flex-direction: column; align-items: center; background: #eee; }
.arw { width: 10px; height: 8px; margin: 6px 0; flex: none; }
.trk { flex: 1; width: 100%; padding-top: 96px; }
.thumb { background: #c6c6c6; height: 303px; }
.propcol { flex: 1; display: flex; flex-direction: column; padding-left: 6px; min-width: 0; }
.ptabs { height: 20px; margin-top: 1px; flex: none; display: flex; }
.ptab { width: 66px; height: 20px; border: 1px solid #ccc; border-bottom: 0; text-align: center; line-height: 20px; background: #fff; }
.ppanel { flex: 1; margin: 0 6px 3px 4px; display: flex; border: 1px solid #aaa; background: #fff; }
.pgrid { flex: 1; padding-top: 1px; }
.ph { height: 27px; display: flex; background: #f4f4f4; }
.pr { height: 19px; display: flex; border-bottom: 1px solid #ccc; }
.pn { width: 21px; flex: none; background: #f2f2f2; border-right: 1px solid #bbb; border-left: 1px solid #ddd; text-align: center; line-height: 18px; font-size: 12px; color: #222; }
.ph .pn { border-bottom: 1px solid #ccc; }
.pname { flex: 1; padding-left: 20px; line-height: 20px; }
.hd { padding-left: 71px; line-height: 29px; }
.act .pname { background: #0078d7; color: #fff; }
.act .pn { background: #ffd08e; color: #5b0a6b; }
.blue .pname { color: #0000f0; }
.gray .pname { color: #8c8c8c; }
.pl { display: flex; align-items: center; padding-left: 3px; gap: 5px; }
.plus { width: 12px; height: 12px; border: 1px solid #aaa; font: 12px/10px "Liberation Sans", sans-serif; text-align: center; color: #222; }
.psb { width: 20px; flex: none; display: flex; flex-direction: column; justify-content: flex-end; align-items: center; border-left: 1px solid #ddd; }

/* status */
.status { height: 20px; flex: none; display: flex; gap: 3px; background: #f4f4f4; white-space: nowrap; }
.st { border: 1px solid #ddd; line-height: 18px; padding-left: 1px; flex: none; }
.s0 { width: 147px; } .s1 { width: 77px; } .s2 { width: 97px; } .s3 { width: 48px; padding-left: 3px; } .s4 { width: 914px; } .s5 { flex: 1; min-width: 0; }

/* taskbar */
.taskbar { height: 40px; flex: none; display: flex; align-items: center; background: #081016; color: #eee; white-space: nowrap; }
.start { width: 48px; height: 40px; background: #000; display: flex; align-items: center; justify-content: center; }
.winlogo { width: 16px; height: 16px; }
.searchbox { width: 344px; height: 40px; background: #3a3a3a; display: flex; align-items: center; padding-left: 13px; color: #a8a8a8; font-size: 13px; }
.ring { width: 20px; height: 20px; border: 3px solid #eee; border-radius: 50%; margin-right: 3px; }
.sbtxt { flex: 1; }
.mic { width: 12px; height: 18px; margin-right: 15px; }
.apps { display: flex; align-items: center; height: 40px; padding-left: 2.500px; }
.app-i { width: 49px; height: 40px; display: flex; align-items: center; justify-content: center; flex: none; }
.app-i.run { background: linear-gradient(#76b9ed, #76b9ed) bottom center / 42px 2px no-repeat; }
.app-i.active { background: #2c3d4a; border-bottom: 2px solid #76b9ed; }
.tsep { width: 1px; height: 20px; background: #444; margin: 0 14.500px 0 8.500px; }
.cpu { display: flex; flex-direction: column; align-items: center; width: 60px; line-height: 16px; font-size: 12.500px; }
.tray { display: flex; align-items: center; gap: 8px; margin-left: 12px; }
.chv { margin-right: 2px; }
.zh { font-size: 13px; color: #fff; margin-right: 7px; }
.sgsm { width: 14px; height: 15px; background: #f04a1a; color: #fff; font: 700 12px/15px "Liberation Sans", sans-serif; text-align: center; border-radius: 2px; transform: rotate(-6deg); }
.clock { display: flex; flex-direction: column; align-items: center; width: 70px; margin-left: 12px; line-height: 18px; font-size: 12.500px; }
.notif { width: 16px; height: 16px; margin: 0 24px 0 18px; }

/* dialog */
.dlg { position: absolute; left: 570px; top: 133px; width: 770px; height: 569px; border: 1px solid #444; background: #b9d1ea; display: flex; flex-direction: column; }
.dlgtitle { height: 29px; flex: none; padding: 10px 0 0 7px; background: linear-gradient(#9dbad8, #dfeaf6); line-height: 16px; }
.dlgbody { flex: 1; margin: 0 5px 6px 6px; display: flex; flex-direction: column; background: #f0f0f0; min-height: 0; }
.dtabs { height: 21px; flex: none; display: flex; align-items: flex-end; padding-left: 4px; }
.dtab { width: 40px; height: 19px; padding-left: 4px; background: #f4f4f4; border: 1px solid #ccc; border-bottom: 0; line-height: 18px; }
.dtab.cur { width: 45px; height: 21px; padding-left: 6px; margin-left: 0; background: #fff; border: 0; line-height: 20px; }
.dpanel { flex: 1; border: 1px solid #ddd; background: #f8f8f8; padding: 3px 0 0 5px; display: flex; flex-direction: column; min-height: 0; }
.dpanel .ti { gap: 4px; }
.drow { display: flex; align-items: center; flex: none; white-space: nowrap; }
.r1 { height: 28px; width: 525px; padding-left: 6px; gap: 7px; background: linear-gradient(#fafafa, #efefef); }
.r2 { height: 24px; width: 318px; margin-top: 2px; padding-left: 6px; gap: 6px; background: linear-gradient(#fafafa, #efefef); }
.a { margin-left: 2px; }
.a1 { margin-left: -1px; }
.b { margin-left: -4px; }
.c { margin-left: -3px; }
.e { margin-left: 1px; }
.ty { margin-left: -3px; }
.dpanel .tiny { gap: 0; }
.dpanel .tiny .car { margin-left: 8px; }
.spec { width: 79px; height: 22px; margin-left: -3px; background: #fff; display: flex; align-items: center; justify-content: space-between; padding: 0 3px; font-family: "Liberation Sans", sans-serif; font-size: 13px; }
.tg { display: inline-flex; align-items: center; gap: 5px; border: 1px solid #0078d7; background: #e5f1fb; height: 24px; padding: 0 3px; flex: none; }
.sel1 { width: 51px; height: 26px; margin-left: -4px; padding-left: 3px; gap: 2px; }
.sel2 { width: 34px; margin-left: -6px; justify-content: center; }
.dis { color: #9a9a9a; margin-left: 2px; }
.canvas { margin-top: 2px; height: 395px; width: 749px; flex: none; border: 2px solid #f00; background: #14171f; overflow: hidden; }
.draw { width: 749px; height: 395px; margin: -2px; }
.gline { fill: none; stroke: #3a3e46; }
.gdash { fill: none; stroke: #000; stroke-dasharray: 6 7; }
.gridsolid { fill: none; stroke: #3a3e46; }
.glabel text { font: 12px "Liberation Mono", monospace; fill: #41454d; }
.dlabel text { font: 9px "Liberation Mono", monospace; fill: #eef2f8; }
.cyan { fill: none; stroke: #a9c4ea; stroke-width: 1; stroke-dasharray: 3 3; }
.ray { fill: none; stroke: #999; stroke-dasharray: 3 3; }
.outline { fill: none; stroke: #ececec; stroke-width: 2.500; }
.dim { fill: none; stroke: #7cc060; stroke-width: 1; }
.dim2 { fill: none; stroke: #5f9a4a; stroke-width: 1; }
.rebar { fill: none; stroke: #c4161c; stroke-width: 5; stroke-linejoin: round; }
.rebar.thick { stroke-width: 6; }
.thin { fill: none; stroke: #f4f4f4; }
.tick { fill: none; stroke: #12d012; }
.dotsy circle { fill: #c4161c; stroke: #ffd800; stroke-width: 1; }
.r3 { height: 25px; margin-top: 2px; padding-left: 1px; gap: 1px; }
.r3 .tg { height: 23px; gap: 3px; }
.w50 { width: 50px; }
.w75 { width: 75px; }
.dpanel .vd { margin: 0 2px 0 5px; gap: 6px; }
.dstatus { margin-top: 7px; height: 22px; flex: none; display: flex; align-items: center; background: #f4f4f4; margin-left: -5px; }
.xy { width: 97px; height: 22px; padding: 2px 0 0 4px; border: 1px solid #ddd; margin-right: 5px; font-size: 11.500px; white-space: nowrap; }
.dmsg { flex: 1; }
.grip { width: 10px; height: 10px; margin: 8px 2px 0 0; background: radial-gradient(#aaa 1px, transparent 1.200px) 0 0 / 3px 3px; }

/* IME */
.ime { position: absolute; left: 405px; top: 4px; width: 185px; height: 24px; background: #fff; border: 1px solid #d0dce8; display: flex; align-items: center; gap: 6px; padding-left: 2px; }
.imes { width: 24px; height: 24px; background: #ee4b1b; color: #fff; font: 700 20px/23px "Liberation Sans", sans-serif; text-align: center; border-radius: 4px; transform: rotate(-8deg); margin-top: 2px; flex: none; }
.imez { color: #1a7dd0; font-weight: 700; font-size: 15px; }
.imep { color: #1a7dd0; font: 700 14px/14px "Liberation Sans", sans-serif; width: 14px; }
.imem { margin-left: 3px; }

/* ball */
.ball { position: absolute; left: 1182px; top: -27px; width: 46px; height: 46px; border-radius: 50%; background: radial-gradient(circle at 50% 60%, #4fc84a, #2a9b2e); border: 2px solid #dfeee0; box-shadow: 0 1px 3px #555; color: #fff; text-align: center; font: 700 11px "Liberation Sans", sans-serif; padding-top: 27px; }

/* wifi */
.wifi { position: absolute; left: 1028px; top: 648px; width: 261px; height: 45px; border-radius: 23px; background: #5c5c5c; border: 2px solid #ddd; display: flex; align-items: center; color: #ddd; }
.wcircle { width: 41px; height: 41px; flex: none; border-radius: 50%; background: radial-gradient(circle, #3fd45a 0 62%, #2fbf4a 64%); display: flex; align-items: center; justify-content: center; position: relative; }
.wsh { width: 22px; height: 26px; }
.wplus { position: absolute; right: -5px; bottom: -4px; width: 15px; height: 15px; border-radius: 50%; background: #ffe600; border: 2px solid #2fa040; color: #1a7a2a; font: 700 12px/11px "Liberation Sans", sans-serif; text-align: center; }
.wtxt { margin-left: 13px; width: 156px; flex: none; }
.wgear { width: 14px; height: 14px; }
.wx { width: 12px; height: 12px; margin-left: 12px; }
```
